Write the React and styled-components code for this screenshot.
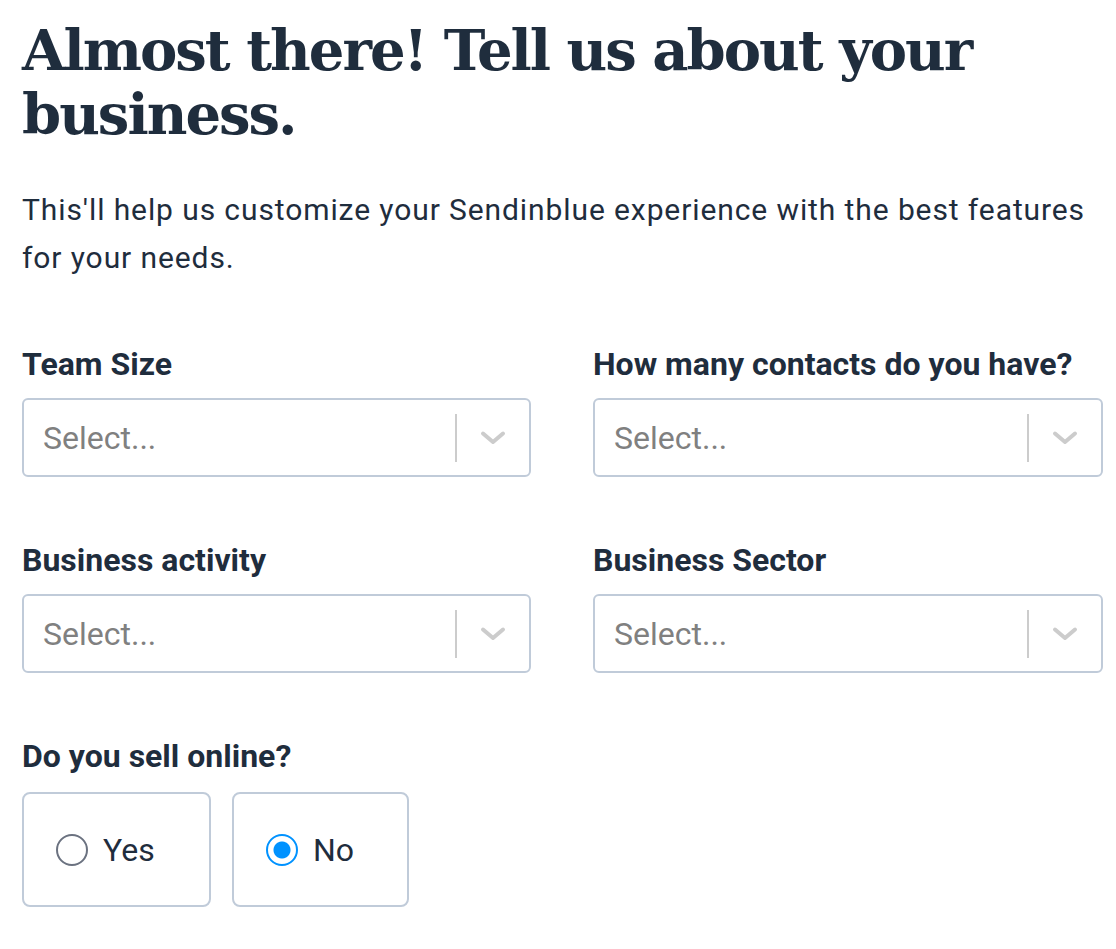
import React, { useState } from 'react'
import styled, { createGlobalStyle } from 'styled-components'

const GlobalStyle = createGlobalStyle`
   body {
      margin: 0;
      background: #ffffff;
      font-family: Roboto, 'Noto Sans', sans-serif;
      color: #1f2d3d;
   }
`

const Chevron = () => (
   <svg width="26" height="16" viewBox="0 0 26 16" fill="none">
      <path d="M3 3.5 L13 12 L23 3.5" stroke="#cccccc" strokeWidth="4" strokeLinecap="round" strokeLinejoin="round" />
   </svg>
)

const SelectField = ({ label }) => (
   <Field>
      <Label>{label}</Label>
      <SelectBox>
         <Placeholder>Select...</Placeholder>
         <Indicators>
            <Separator />
            <ChevronWrap>
               <Chevron />
            </ChevronWrap>
         </Indicators>
      </SelectBox>
   </Field>
)

const App = () => {
   const [online, setOnline] = useState('no')

   return (
      <>
         <GlobalStyle />
         <Page>
            <Title>Almost there! Tell us about your business.</Title>
            <Intro>
               This'll help us customize your Sendinblue experience with the best features for your
               needs.
            </Intro>
            <Grid>
               <SelectField label="Team Size" />
               <SelectField label="How many contacts do you have?" />
               <SelectField label="Business activity" />
               <SelectField label="Business Sector" />
            </Grid>
            <Field>
               <Label>Do you sell online?</Label>
               <RadioRow>
                  <RadioCard $width={189} onClick={() => setOnline('yes')}>
                     <RadioDot $checked={online === 'yes'} />
                     Yes
                  </RadioCard>
                  <RadioCard $width={177} onClick={() => setOnline('no')}>
                     <RadioDot $checked={online === 'no'} />
                     No
                  </RadioCard>
               </RadioRow>
            </Field>
         </Page>
      </>
   )
}

export default App

const Page = styled.div`
   padding: 18px 22px 40px 22px;
   width: 1081px;
`

const Title = styled.h1`
   margin: 0;
   font-family: 'DejaVu Serif', 'Liberation Serif', serif;
   font-weight: 700;
   font-size: 56px;
   line-height: 64px;
   letter-spacing: -2px;
   color: #1f2d3d;
`

const Intro = styled.p`
   margin: 40px 0 0 0;
   font-size: 30px;
   line-height: 48px;
   letter-spacing: 0.9px;
   color: #1f2d3d;
`

const Grid = styled.div`
   display: grid;
   grid-template-columns: 509px 510px;
   column-gap: 62px;
   row-gap: 64px;
   margin: 63px 0 64px 0;
`

const Field = styled.div`
   display: flex;
   flex-direction: column;
`

const Label = styled.div`
   font-size: 32px;
   font-weight: 700;
   line-height: 38px;
   margin-bottom: 15px;
   color: #1f2d3d;
`

const SelectBox = styled.div`
   display: flex;
   align-items: center;
   height: 79px;
   box-sizing: border-box;
   border: 2px solid #c0cbd9;
   border-radius: 6px;
   background: #ffffff;
`

const Placeholder = styled.div`
   flex: 1;
   padding-left: 19px;
   font-size: 32px;
   color: #808080;
`

const Indicators = styled.div`
   display: flex;
   align-items: center;
   height: 100%;
`

const Separator = styled.span`
   width: 2px;
   height: 48px;
   background: #cccccc;
`

const ChevronWrap = styled.div`
   display: flex;
   align-items: center;
   justify-content: center;
   width: 72px;
`

const RadioRow = styled.div`
   display: flex;
   gap: 21px;
   margin-top: 2px;
`

const RadioCard = styled.label`
   display: flex;
   align-items: center;
   gap: 15px;
   box-sizing: border-box;
   width: ${(p) => p.$width}px;
   height: 115px;
   padding-left: 32px;
   border: 2px solid #c0cbd9;
   border-radius: 8px;
   font-size: 32px;
   color: #1f2d3d;
   cursor: pointer;
`

const RadioDot = styled.span`
   box-sizing: border-box;
   width: 32px;
   height: 32px;
   border-radius: 50%;
   border: 2px solid ${(p) => (p.$checked ? '#0092ff' : '#6b7280')};
   background: ${(p) => (p.$checked ? 'radial-gradient(circle, #0092ff 0 8px, #fff 9px)' : '#fff')};
`
